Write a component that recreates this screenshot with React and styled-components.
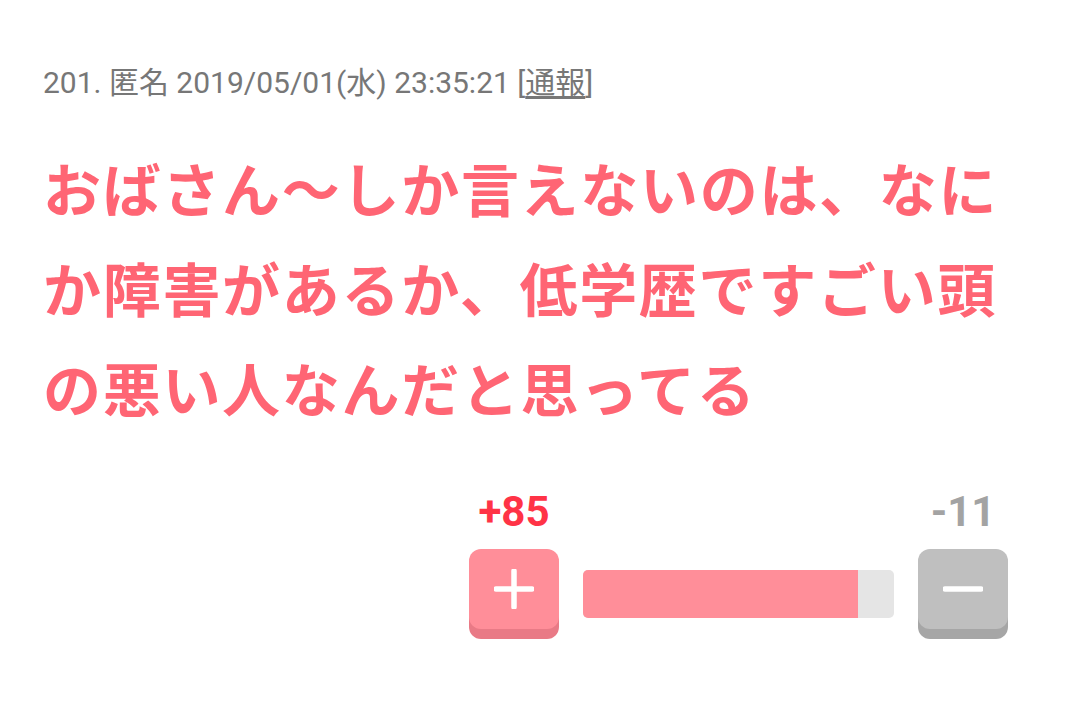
import React from "react";
import styled, { createGlobalStyle } from "styled-components";

const Global = createGlobalStyle`
  html, body { margin: 0; padding: 0; background: #fff; }
  body { font-family: Roboto, "Noto Sans CJK JP", sans-serif; }
`;

const Page = styled.div`
  width: 1080px;
  height: 716px;
  box-sizing: border-box;
  padding: 63px 40px 0 43px;
  display: flex;
  flex-direction: column;
`;

const Meta = styled.div`
  font-family: Roboto, "Noto Sans CJK JP", sans-serif;
  font-size: 30px;
  line-height: 40px;
  color: #777777;
  white-space: nowrap;
`;

const Report = styled.span`
  text-decoration: underline;
  text-underline-offset: 3px;
`;

const Title = styled.h1`
  margin: 34px 0 0 0;
  width: 996px;
  font-family: "Noto Sans CJK JP", sans-serif;
  font-weight: 700;
  font-size: 58px;
  letter-spacing: 1.7px;
  line-height: 100px;
  color: #ff6574;
`;

const Votes = styled.div`
  margin-top: 52px;
  align-self: flex-end;
  margin-right: 32px;
  display: flex;
  align-items: flex-end;
  gap: 24px;
`;

const VoteCol = styled.div`
  display: flex;
  flex-direction: column;
  align-items: center;
  gap: 14px;
`;

const Count = styled.div`
  font-family: Roboto, sans-serif;
  font-weight: 700;
  font-size: 42px;
  line-height: 46px;
  color: ${(p) => p.$color};
`;

const Button = styled.button`
  width: 90px;
  height: 80px;
  margin-bottom: 10px;
  border: none;
  border-radius: 12px;
  padding: 0;
  background: ${(p) => p.$bg};
  box-shadow: 0 10px 0 ${(p) => p.$shade};
  display: flex;
  align-items: center;
  justify-content: center;
  cursor: pointer;
`;

const Bar = styled.div`
  width: 311px;
  height: 48px;
  margin-bottom: 21px;
  border-radius: 5px;
  background: #e5e5e5;
  overflow: hidden;
  display: flex;
`;

const Fill = styled.div`
  height: 100%;
  background: #ff8e99;
`;

export default function App() {
  const plus = 85;
  const minus = 11;
  const ratio = (plus / (plus + minus)) * 100;
  return (
    <>
      <Global />
      <Page>
        <Meta>
          201. 匿名 2019/05/01(水) 23:35:21 [<Report>通報</Report>]
        </Meta>
        <Title>
          おばさん〜しか言えないのは、なにか障害があるか、低学歴ですごい頭の悪い人なんだと思ってる
        </Title>
        <Votes>
          <VoteCol>
            <Count $color="#ff3346">+85</Count>
            <Button $bg="#ff8e99" $shade="#e97a86" aria-label="plus">
              <svg width="40" height="40" viewBox="0 0 40 40">
                <path d="M20 2 V38 M2 20 H38" stroke="#fff" strokeWidth="5.5" strokeLinecap="round" fill="none" />
              </svg>
            </Button>
          </VoteCol>
          <Bar>
            <Fill style={{ width: `${ratio}%` }} />
          </Bar>
          <VoteCol>
            <Count $color="#a3a3a3">-11</Count>
            <Button $bg="#bfbfbf" $shade="#a6a6a6" aria-label="minus">
              <svg width="40" height="40" viewBox="0 0 40 40">
                <path d="M2 20 H38" stroke="#fff" strokeWidth="5.5" strokeLinecap="round" fill="none" />
              </svg>
            </Button>
          </VoteCol>
        </Votes>
      </Page>
    </>
  );
}
